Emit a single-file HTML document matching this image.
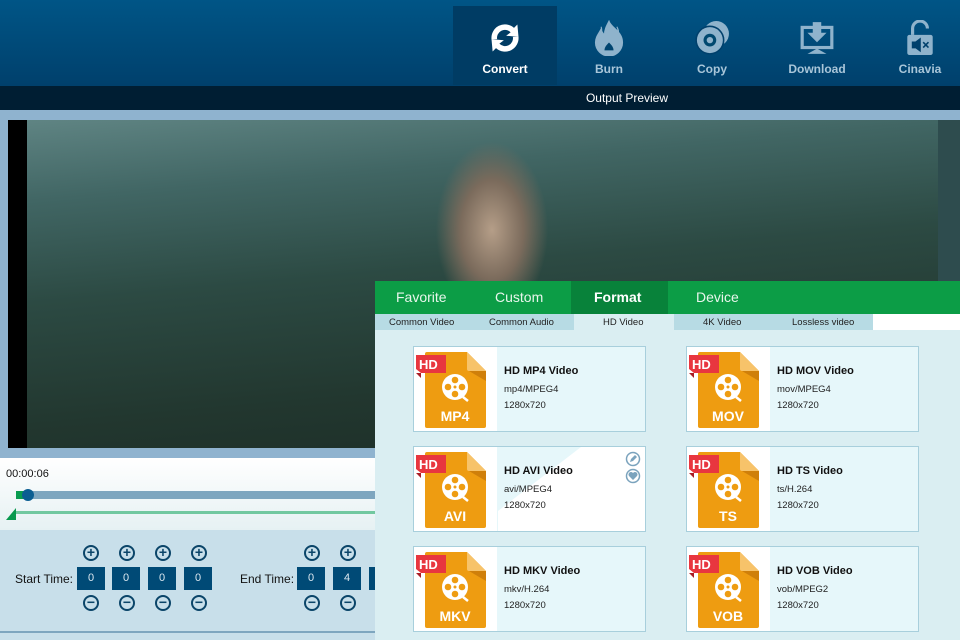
<!DOCTYPE html>
<html><head><meta charset="utf-8"><style>
*{margin:0;padding:0;box-sizing:border-box}
body{width:960px;height:640px;overflow:hidden;position:relative;font-family:"Liberation Sans",sans-serif;background:#c6dde9}
.a{position:absolute}
.top{left:0;top:0;width:960px;height:86px;background:linear-gradient(#005586,#00406c)}
.nav{top:6px;width:100px;height:79px;text-align:center;color:#a9c6d9;font-size:12px;font-weight:bold}
.nav svg{display:block;margin:14px auto 6px}
.card{width:233px;height:86px;border:1px solid #a8cfdc;background:#e6f7fa}
.card .ic{position:absolute;left:0;top:0;width:83px;height:84px;background:#fff}
.card .t{position:absolute;left:90px;top:18px;font-size:11px;font-weight:bold;color:#111}
.card .s{position:absolute;left:90px;top:35px;font-size:9.5px;color:#222;line-height:16px}
.box{width:28px;height:23px;background:#004a76;color:#dbe8f0;font-size:11px;text-align:center;line-height:23px}
.pm{width:16px;height:16px;border:2px solid #0b4569;border-radius:50%;color:#0b4569;font-weight:bold;font-size:14px;line-height:11px;text-align:center}
</style></head><body>
<div class="a top"></div>
<div class="a" style="left:453px;top:6px;width:104px;height:79px;background:#003c64"></div>
<div class="a nav" style="left:455px;color:#fff"><svg width="36" height="36" viewBox="0 0 32 32"><path d="M4 17a12 12 0 0 1 20-10l3-3 1 11-11-1 4-3a7 7 0 0 0-12 6z M28 15a12 12 0 0 1-20 10l-3 3-1-11 11 1-4 3a7 7 0 0 0 12-6z" fill="#fff"/></svg>Convert</div>
<div class="a nav" style="left:559px"><svg width="36" height="36" viewBox="0 0 32 32"><path d="M16 1c2 6 12 9 12 19a12 12 0 0 1-24 0c0-5 3-8 5-12 1 4 3 5 3 5 0-5 2-8 4-12z M9 6c1 3 0 5 0 5 M23 6c1 2 2 4 1 6" fill="#8fb3cc" stroke="#8fb3cc"/><path d="M16 20c2 2 4 4 4 7h-8c0-3 2-5 4-7z" fill="#00446f"/></svg>Burn</div>
<div class="a nav" style="left:662px"><svg width="36" height="36" viewBox="0 0 34 32"><circle cx="21" cy="12" r="12" fill="#8fb3cc"/><circle cx="15" cy="18" r="13" fill="#8fb3cc" stroke="#00406c" stroke-width="1.5"/><circle cx="15" cy="18" r="6" fill="#00486f"/><circle cx="15" cy="18" r="3" fill="#8fb3cc"/></svg>Copy</div>
<div class="a nav" style="left:767px"><svg width="36" height="36" viewBox="0 0 34 32"><rect x="3" y="6" width="28" height="19" fill="none" stroke="#8fb3cc" stroke-width="3"/><path d="M13 1h8v10h5l-9 9-9-9h5z" fill="#8fb3cc"/><path d="M8 31l9-5 9 5z" fill="#8fb3cc"/></svg>Download</div>
<div class="a nav" style="left:870px"><svg width="32" height="36" viewBox="0 0 30 34"><path d="M8 14V8a7 7 0 0 1 14 0" fill="none" stroke="#8fb3cc" stroke-width="3"/><rect x="3" y="14" width="24" height="19" rx="2" fill="#8fb3cc"/><path d="M8 21h3l4-3v11l-4-3H8z M18 21l5 5 M23 21l-5 5" fill="#00406c" stroke="#00406c" stroke-width="1.5"/></svg>Cinavia</div>
<div class="a" style="left:0;top:86px;width:960px;height:24px;background:#001e33;color:#fff;font-size:12px;text-align:center;line-height:24px;padding-left:294px">Output Preview</div>
<div class="a" style="left:0;top:110px;width:960px;height:350px;background:#8fb3cf"></div>
<div class="a" style="left:8px;top:120px;width:19px;height:328px;background:#000"></div>
<div class="a" style="left:938px;top:120px;width:22px;height:328px;background:#2e4c4e"></div>
<div class="a" style="left:27px;top:120px;width:911px;height:328px;background:radial-gradient(ellipse 70px 110px at 465px 110px,#b59e88 0%,#7b6b5c 45%,transparent 80%),linear-gradient(175deg,#5f8483 0%,#416664 20%,#2c4a43 45%,#22372f 75%,#1c2d27 100%)"></div>
<div class="a" style="left:0;top:458px;width:375px;height:72px;background:linear-gradient(#fff,#e6f1f3)"></div>
<div class="a" style="left:6px;top:468px;font-size:11px;color:#111">00:00:06</div>
<div class="a" style="left:16px;top:491px;width:360px;height:8px;background:#7ea6bf"></div>
<div class="a" style="left:16px;top:491px;width:12px;height:8px;background:#0a9c50"></div>
<div class="a" style="left:22px;top:489px;width:12px;height:12px;border-radius:50%;background:#0b5e92"></div>
<div class="a" style="left:16px;top:511px;width:360px;height:3px;background:#72c8a0"></div>
<div class="a" style="left:6px;top:508px;width:0;height:0;border-left:10px solid transparent;border-bottom:12px solid #08994e"></div>
<div class="a" style="left:0;top:530px;width:375px;height:110px;background:#c8dfea"></div>
<div class="a" style="left:0;top:631px;width:375px;height:2px;background:#7ea6bf"></div>
<div class="a" style="left:15px;top:572px;font-size:12px;color:#111">Start Time:</div>
<div class="a" style="left:240px;top:572px;font-size:12px;color:#111">End Time:</div>
<div class="a box" style="left:77px;top:567px">0</div><div class="a box" style="left:112px;top:567px">0</div><div class="a box" style="left:148px;top:567px">0</div><div class="a box" style="left:184px;top:567px">0</div>
<div class="a box" style="left:297px;top:567px">0</div><div class="a box" style="left:333px;top:567px">4</div><div class="a box" style="left:369px;top:567px;width:8px"></div>
<div class="a pm" style="left:83px;top:545px">+</div><div class="a pm" style="left:119px;top:545px">+</div><div class="a pm" style="left:155px;top:545px">+</div><div class="a pm" style="left:191px;top:545px">+</div><div class="a pm" style="left:304px;top:545px">+</div><div class="a pm" style="left:340px;top:545px">+</div>
<div class="a pm" style="left:83px;top:595px">−</div><div class="a pm" style="left:119px;top:595px">−</div><div class="a pm" style="left:155px;top:595px">−</div><div class="a pm" style="left:191px;top:595px">−</div><div class="a pm" style="left:304px;top:595px">−</div><div class="a pm" style="left:340px;top:595px">−</div>
<!-- panel -->
<div class="a" style="left:375px;top:281px;width:585px;height:359px;background:#daeef2"></div>
<div class="a" style="left:375px;top:281px;width:585px;height:33px;background:#0c9d46"></div>
<div class="a" style="left:571px;top:281px;width:97px;height:33px;background:#08823a"></div>
<div class="a" style="left:396px;top:289px;font-size:14px;color:#e8f6ec">Favorite</div>
<div class="a" style="left:495px;top:289px;font-size:14px;color:#e8f6ec">Custom</div>
<div class="a" style="left:594px;top:289px;font-size:14px;color:#fff;font-weight:bold">Format</div>
<div class="a" style="left:696px;top:289px;font-size:14px;color:#e8f6ec">Device</div>
<div class="a" style="left:375px;top:314px;width:498px;height:16px;background:#b7dbe4"></div>
<div class="a" style="left:574px;top:314px;width:100px;height:17px;background:#daeef2"></div>
<div class="a" style="left:873px;top:314px;width:87px;height:16px;background:#fff"></div>
<div class="a" style="left:389px;top:317px;font-size:9.5px;color:#222">Common Video</div>
<div class="a" style="left:489px;top:317px;font-size:9.5px;color:#222">Common Audio</div>
<div class="a" style="left:603px;top:317px;font-size:9.5px;color:#222">HD Video</div>
<div class="a" style="left:703px;top:317px;font-size:9.5px;color:#222">4K Video</div>
<div class="a" style="left:792px;top:317px;font-size:9.5px;color:#222">Lossless video</div>

<svg width="0" height="0" style="position:absolute"><defs><g id="doc"><path d="M13 5h40l19 19v55a2 2 0 0 1-2 2H13a2 2 0 0 1-2-2V7a2 2 0 0 1 2-2z" fill="#ee9c11"/><path d="M53 5l19 19H55a2 2 0 0 1-2-2z" fill="#f7c36a"/><path d="M55 24h17v10z" fill="#cf7f0a"/><path d="M2 8h30v18H7l-5-4z" fill="#e8363f"/><path d="M2 26l5 0 0 5z" fill="#a81c24"/><text x="5" y="22" font-family="Liberation Sans" font-weight="bold" font-size="13" fill="#fff">HD</text><circle cx="41" cy="40" r="13" fill="#fff"/><circle cx="41" cy="33" r="3.3" fill="#ee9c11"/><circle cx="41" cy="47" r="3.3" fill="#ee9c11"/><circle cx="34" cy="40" r="3.3" fill="#ee9c11"/><circle cx="48" cy="40" r="3.3" fill="#ee9c11"/><circle cx="41" cy="40" r="1.5" fill="#ee9c11"/><path d="M49 50l5 4" stroke="#fff" stroke-width="2.5"/></g></defs></svg>

<div class="a card" style="left:413px;top:346px"><div class="ic"><svg width="83" height="84"><use href="#doc"/><text x="41" y="74" text-anchor="middle" font-family="Liberation Sans" font-weight="bold" font-size="14" fill="#fff">MP4</text></svg></div><div class="t">HD MP4 Video</div><div class="s">mp4/MPEG4<br>1280x720</div></div>
<div class="a card" style="left:686px;top:346px"><div class="ic"><svg width="83" height="84"><use href="#doc"/><text x="41" y="74" text-anchor="middle" font-family="Liberation Sans" font-weight="bold" font-size="14" fill="#fff">MOV</text></svg></div><div class="t">HD MOV Video</div><div class="s">mov/MPEG4<br>1280x720</div></div>
<div class="a card" style="left:413px;top:446px;background:#fff"><div class="a" style="left:0;top:0;width:231px;height:84px;background:#e6f7fa;clip-path:polygon(0 0,167px 0,84px 64px,84px 84px,0 84px)"></div><div class="ic"><svg width="83" height="84"><use href="#doc"/><text x="41" y="74" text-anchor="middle" font-family="Liberation Sans" font-weight="bold" font-size="14" fill="#fff">AVI</text></svg></div><div class="t">HD AVI Video</div><div class="s">avi/MPEG4<br>1280x720</div>
<svg class="a" style="left:211px;top:4px" width="16" height="34"><circle cx="8" cy="8" r="6.5" fill="none" stroke="#7ba3bd" stroke-width="1.5"/><path d="M5 11l1-3 4-4 2 2-4 4z" fill="#7ba3bd"/><circle cx="8" cy="25" r="6.5" fill="none" stroke="#7ba3bd" stroke-width="1.5"/><path d="M8 29l-4-4a2 2 0 0 1 4-3 2 2 0 0 1 4 3z" fill="#7ba3bd"/></svg></div>
<div class="a card" style="left:686px;top:446px"><div class="ic"><svg width="83" height="84"><use href="#doc"/><text x="41" y="74" text-anchor="middle" font-family="Liberation Sans" font-weight="bold" font-size="14" fill="#fff">TS</text></svg></div><div class="t">HD TS Video</div><div class="s">ts/H.264<br>1280x720</div></div>
<div class="a card" style="left:413px;top:546px"><div class="ic"><svg width="83" height="84"><use href="#doc"/><text x="41" y="74" text-anchor="middle" font-family="Liberation Sans" font-weight="bold" font-size="14" fill="#fff">MKV</text></svg></div><div class="t">HD MKV Video</div><div class="s">mkv/H.264<br>1280x720</div></div>
<div class="a card" style="left:686px;top:546px"><div class="ic"><svg width="83" height="84"><use href="#doc"/><text x="41" y="74" text-anchor="middle" font-family="Liberation Sans" font-weight="bold" font-size="14" fill="#fff">VOB</text></svg></div><div class="t">HD VOB Video</div><div class="s">vob/MPEG2<br>1280x720</div></div>
</body></html>
